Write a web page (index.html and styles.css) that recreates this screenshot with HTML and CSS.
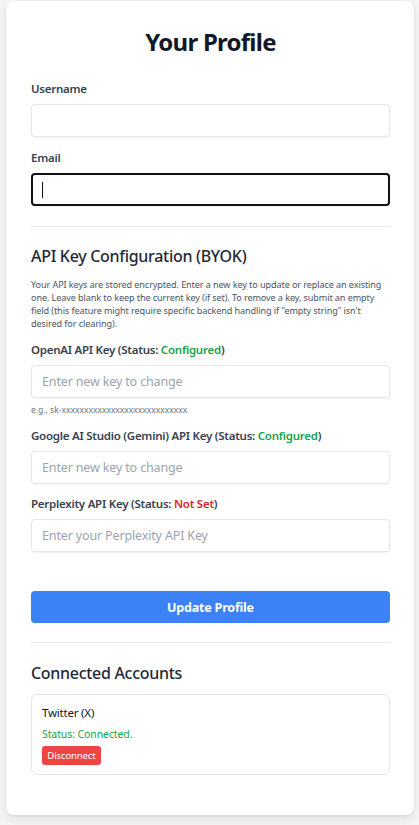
FILE: index.html
```html
<!DOCTYPE html>
<html lang="en">
<head>
<meta charset="utf-8">
<title>Your Profile</title>
<link rel="stylesheet" href="styles.css">
</head>
<body>
<div class="card">
  <h1 class="title">Your Profile</h1>
  <form class="form">
    <div class="field">
      <label class="label" for="username">Username</label>
      <input class="input" id="username" type="text">
    </div>
    <div class="field field-gap">
      <label class="label" for="email">Email</label>
      <div class="focus-wrap">
        <input class="input input-focus" id="email" type="email">
        <span class="caret"></span>
      </div>
    </div>
    <hr class="divider divider-top">
    <h2 class="section-title">API Key Configuration (BYOK)</h2>
    <p class="desc">Your API keys are stored encrypted. Enter a new key to update or replace an existing one. Leave blank to keep the current key (if set). To remove a key, submit an empty field (this feature might require specific backend handling if "empty string" isn't desired for clearing).</p>
    <div class="field key-first">
      <label class="label" for="openai">OpenAI API Key (Status: <span class="ok">Configured</span>)</label>
      <input class="input" id="openai" type="password" placeholder="Enter new key to change">
      <div class="hint">e.g., sk-xxxxxxxxxxxxxxxxxxxxxxxxxxxx</div>
    </div>
    <div class="field key-gap">
      <label class="label" for="gemini">Google AI Studio (Gemini) API Key (Status: <span class="ok">Configured</span>)</label>
      <input class="input" id="gemini" type="password" placeholder="Enter new key to change">
    </div>
    <div class="field key-gap">
      <label class="label" for="pplx">Perplexity API Key (Status: <span class="bad">Not Set</span>)</label>
      <input class="input" id="pplx" type="password" placeholder="Enter your Perplexity API Key">
    </div>
    <button class="submit" type="button">Update Profile</button>
  </form>
  <hr class="divider divider-bottom">
  <h2 class="section-title accounts-title">Connected Accounts</h2>
  <div class="account">
    <div class="account-name">Twitter (X)</div>
    <div class="account-status">Status: Connected.</div>
    <button class="disconnect" type="button">Disconnect</button>
  </div>
</div>
</body>
</html>
```

FILE: styles.css
```css
* { box-sizing: border-box; }
html, body { margin: 0; padding: 0; }
body {
  background: #f3f4f6;
  font-family: "Noto Sans", "Open Sans", sans-serif;
  padding: 1px 5px 0 6px;
  min-height: 825px;
}
.card {
  background: #ffffff;
  border-radius: 8px;
  box-shadow: 0 4px 10px rgba(0,0,0,0.08), 0 1px 3px rgba(0,0,0,0.06);
  width: 408px;
  height: 814px;
  padding: 25px 24px 0 25px;
}
.title {
  margin: 0;
  text-align: center;
  font-size: 24px;
  line-height: 32px;
  font-weight: 700;
  letter-spacing: -0.75px;
  color: #111827;
}
.form { display: flex; flex-direction: column; margin-top: 23px; }
.field { display: flex; flex-direction: column; }
.field-gap { margin-top: 13px; }
.label {
  font-size: 11.5px;
  line-height: 16px;
  font-weight: 600;
  letter-spacing: -0.25px;
  color: #374151;
  margin-bottom: 7px;
}
.input {
  display: block;
  width: 100%;
  height: 33px;
  border: 1px solid #e5e7eb;
  border-radius: 4px;
  box-shadow: 0 1px 2px rgba(0,0,0,0.06);
  padding: 0 10px;
  font-family: inherit;
  font-size: 12.5px;
  letter-spacing: -0.15px;
  color: #111827;
  background: #fff;
  outline: none;
}
.input::placeholder { color: #9ca3af; }
.focus-wrap { position: relative; }
.input-focus { border: 2px solid #111111; border-radius: 4px; }
.caret {
  position: absolute;
  left: 11px;
  top: 9px;
  width: 1px;
  height: 16px;
  background: #111;
}
.divider {
  border: 0;
  border-top: 1px solid #e5e7eb;
  margin: 0;
}
.divider-top { margin-top: 20px; }
.section-title {
  margin: 17px 0 0;
  font-size: 16px;
  line-height: 24px;
  font-weight: 500;
  letter-spacing: -0.3px;
  color: #1f2937;
}
.desc {
  margin: 10px 0 0;
  font-size: 9.1px;
  line-height: 13px;
  letter-spacing: -0.1px;
  color: #4b5563;
}
.key-first { margin-top: 12px; }
.key-gap { margin-top: 12px; }
.ok { color: #16a34a; }
.bad { color: #dc2626; }
.hint {
  margin-top: 6px;
  font-size: 8.5px;
  line-height: 12px;
  color: #6b7280;
}
.submit {
  margin-top: 39px;
  height: 32px;
  width: 100%;
  border: 0;
  border-radius: 4px;
  background: #3b82f6;
  color: #fff;
  font-family: inherit;
  font-size: 12.5px;
  font-weight: 700;
  letter-spacing: -0.2px;
}
.divider-bottom { margin-top: 19px; }
.accounts-title { margin-top: 18px; }
.account {
  margin-top: 9px;
  border: 1px solid #e5e7eb;
  border-radius: 6px;
  padding: 10px 10px 9px 10px;
}
.account-name {
  font-size: 11.5px;
  line-height: 16px;
  letter-spacing: -0.2px;
  color: #111827;
}
.account-status {
  margin-top: 6px;
  font-size: 10.5px;
  line-height: 15px;
  letter-spacing: -0.1px;
  color: #16a34a;
}
.disconnect {
  display: block;
  margin-top: 4px;
  height: 19px;
  width: 59px;
  border: 0;
  border-radius: 3px;
  background: #ef4444;
  color: #fff;
  font-family: inherit;
  font-size: 9.5px;
  letter-spacing: -0.1px;
  padding: 0;
}
```
